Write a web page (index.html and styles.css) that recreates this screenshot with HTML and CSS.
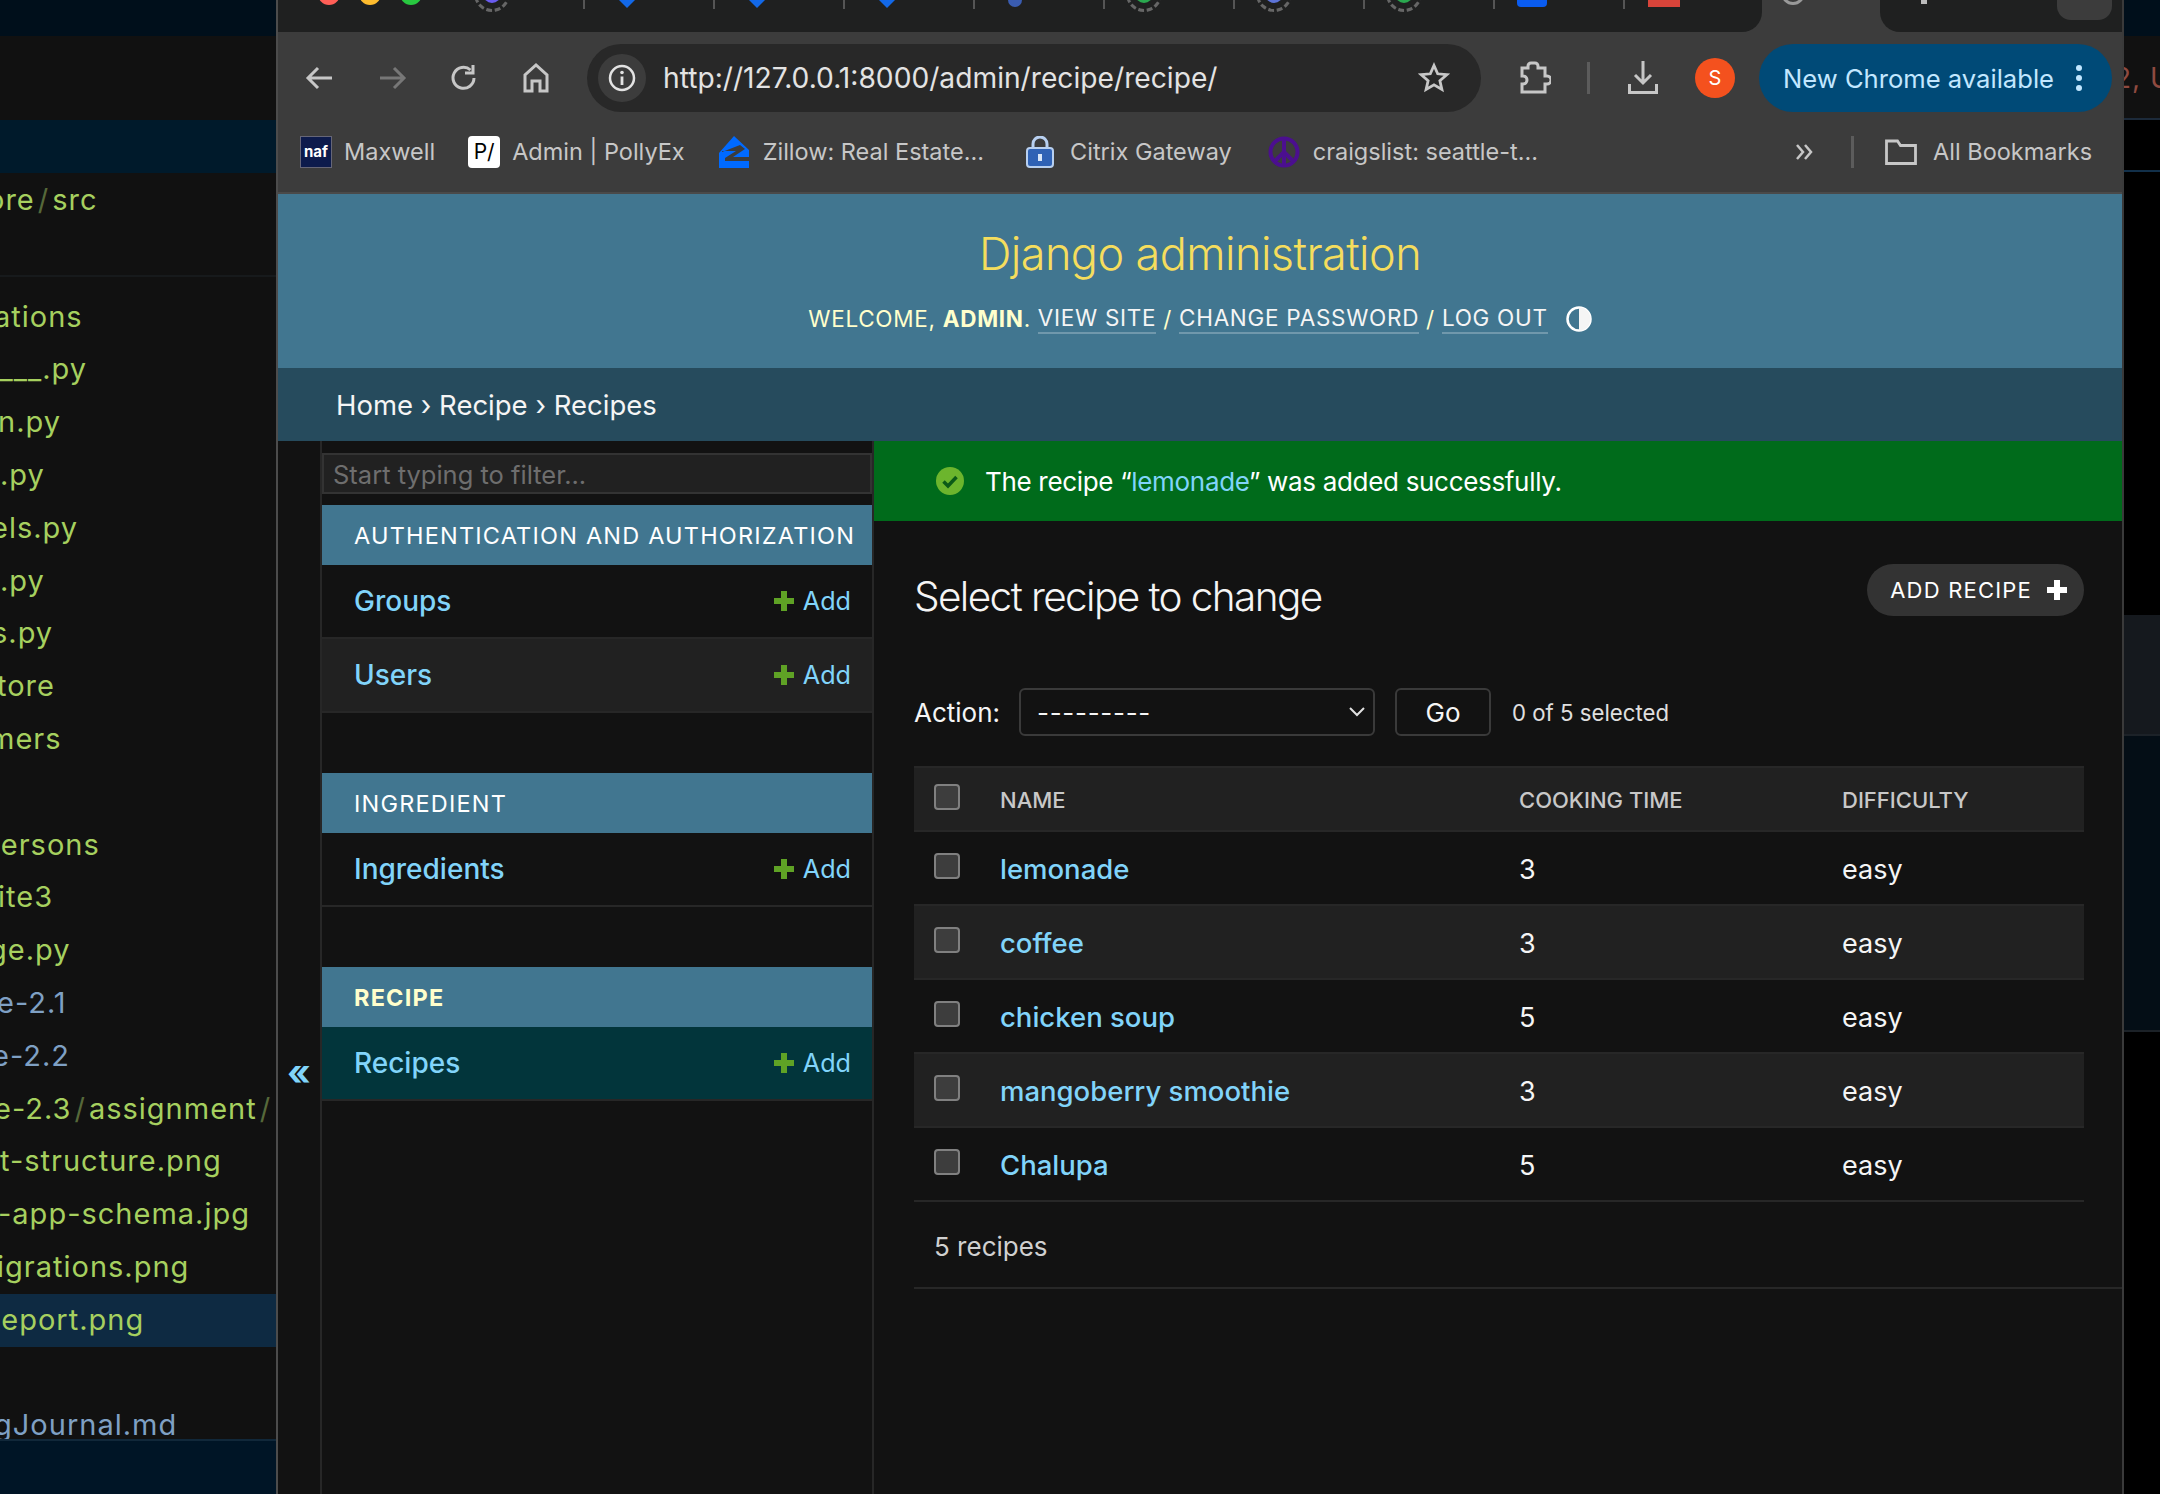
FILE: index.html
```html
<!DOCTYPE html>
<html lang="en" dir="ltr">
  <head>
    <meta charset="utf-8">
    <title>Select recipe to change | Django site admin</title>
    <link rel="stylesheet" href="styles.css">
  </head>
  <body>
    <div class="desktop">
      <div class="editor">
        <div class="ed-top"></div>
        <div class="ed-gap"></div>
        <div class="ed-tab"></div>
        <div class="ed-path ind-13">ore<i>/</i>src</div>
        <div class="ed-files">
          <div class="file ind-6">ations</div>
          <div class="file ind-11">t___.py</div>
          <div class="file ind-2">n.py</div>
          <div class="file">.py</div>
          <div class="file ind-9">els.py</div>
          <div class="file">.py</div>
          <div class="file ind-8">s.py</div>
          <div class="file ind-3">tore</div>
          <div class="file ind-11">mers</div>
          <div class="file"></div>
          <div class="file ind-18">persons</div>
          <div class="file ind-2">ite3</div>
          <div class="file ind-11">ge.py</div>
          <div class="file file-blue ind-3">e-2.1</div>
          <div class="file file-blue ind-8">e-2.2</div>
          <div class="file ind-6">e-2.3<i>/</i>assignment<i>/</i></div>
          <div class="file">t-structure.png</div>
          <div class="file ind-2">-app-schema.jpg</div>
          <div class="file ind-3">igrations.png</div>
          <div class="file file-active ind-18">Report.png</div>
          <div class="file"></div>
          <div class="file file-blue file-cut ind-6">gJournal.md</div>
        </div>
        <div class="ed-status"></div>
      </div>

      <div class="browser">
        <div class="tabstrip">
          <div class="tabs-left">
            <div class="lights"><span class="light red"></span><span class="light yellow"></span><span class="light green"></span></div>
            <div class="tab tab-first"><span class="fav fav-ring ring-first"><span class="fav-purple"></span></span></div>
            <div class="tab"><span class="fav fav-diamond"></span></div>
            <div class="tab"><span class="fav fav-diamond"></span></div>
            <div class="tab"><span class="fav fav-diamond"></span></div>
            <div class="tab"><span class="fav fav-pin"></span></div>
            <div class="tab"><span class="fav fav-ring"><span class="fav-green"></span></span></div>
            <div class="tab"><span class="fav fav-ring"><span class="fav-blue"></span></span></div>
            <div class="tab"><span class="fav fav-ring"><span class="fav-green"></span></span></div>
            <div class="tab"><span class="fav fav-square"></span></div>
            <div class="tab tab-last"><span class="fav fav-red"></span></div>
          </div>
          <div class="tab-active"><span class="fav fav-thin"></span></div>
          <div class="tab-rest"><span class="tab-dot"></span><span class="tab-btn"></span></div>
        </div>

        <div class="toolbar">
          <svg class="tool" width="32" height="32" viewBox="0 0 32 32"><path d="M28 16H5M14 6L4 16l10 10" fill="none" stroke="#c7c7c7" stroke-width="3"/></svg>
          <svg class="tool" width="32" height="32" viewBox="0 0 32 32"><path d="M4 16h23M18 6l10 10-10 10" fill="none" stroke="#777" stroke-width="3"/></svg>
          <svg class="tool" width="32" height="32" viewBox="0 0 32 32"><path d="M26 16a10.500 10.500 0 1 1-3.500-8" fill="none" stroke="#c7c7c7" stroke-width="3"/><path d="M25 3v8h-8" fill="none" stroke="#c7c7c7" stroke-width="3"/></svg>
          <svg class="tool" width="32" height="32" viewBox="0 0 32 32"><path d="M5 29V13L16 3l11 10v16h-7V19h-8v10z" fill="none" stroke="#c7c7c7" stroke-width="3"/></svg>
          <div class="omnibox">
            <span class="omni-chip"><svg width="28" height="28" viewBox="0 0 28 28"><circle cx="14" cy="14" r="12" fill="none" stroke="#e3e3e3" stroke-width="2.500"/><path d="M14 12.500V21" stroke="#e3e3e3" stroke-width="2.800"/><circle cx="14" cy="8.500" r="1.800" fill="#e3e3e3"/></svg></span>
            <span class="omni-url">http://127.0.0.1:8000/admin/recipe/recipe/</span>
            <svg width="32" height="32" viewBox="0 0 32 32"><path d="M16 3.500l3.700 8.300 9 .9-6.800 6 2 8.800-7.900-4.600-7.900 4.600 2-8.800-6.800-6 9-.9z" fill="none" stroke="#c7c7c7" stroke-width="2.800"/></svg>
          </div>
          <svg class="tool-ext" width="32" height="34" viewBox="0 0 32 34"><path d="M3 8h6V6a3 3 0 0 1 3-3h4a3 3 0 0 1 3 3v2h7v8h2a3 3 0 0 1 0 8h-2v8H3v-8h1a4 4 0 0 0 0-8H3z" fill="none" stroke="#c7c7c7" stroke-width="3"/></svg>
          <span class="tool-sep"></span>
          <svg class="tool-dl" width="32" height="34" viewBox="0 0 32 34"><path d="M16 1v21M8 15l8 8 8-8" fill="none" stroke="#c7c7c7" stroke-width="3"/><path d="M2.500 24v8.500h27V24" fill="none" stroke="#c7c7c7" stroke-width="3"/></svg>
          <span class="avatar">S</span>
          <div class="update-pill">
            <span>New Chrome available</span>
            <svg width="8" height="28" viewBox="0 0 8 28"><circle cx="4" cy="4" r="3" fill="#c2e7ff"/><circle cx="4" cy="14" r="3" fill="#c2e7ff"/><circle cx="4" cy="24" r="3" fill="#c2e7ff"/></svg>
          </div>
        </div>

        <div class="bookmarks">
          <a class="bm bm-maxwell"><span class="ico-naf">naf</span>Maxwell</a>
          <a class="bm bm-polly"><span class="ico-polly">P/</span>Admin | PollyEx</a>
          <a class="bm bm-zillow"><svg width="30" height="32" viewBox="0 0 30 32"><path d="M15 0l15 14v18H0V17z" fill="#006aff"/><path d="M3 16L21 9l5 4-12 8h16v4H6v-3l11-7H3z" fill="#3c3c3c"/></svg>Zillow: Real Estate...</a>
          <a class="bm bm-citrix"><svg width="28" height="32" viewBox="0 0 28 32"><rect x="1" y="12" width="26" height="19" rx="3" fill="#2f62b5" stroke="#b8d0f0" stroke-width="2"/><path d="M7 13V8a7 7 0 0 1 14 0v5" fill="none" stroke="#b8d0f0" stroke-width="3"/><rect x="12" y="18" width="4" height="7" fill="#d8e6f8"/></svg>Citrix Gateway</a>
          <a class="bm bm-craigs"><svg width="32" height="32" viewBox="0 0 32 32"><g fill="none" stroke="#4b0f8f" stroke-width="4"><circle cx="16" cy="16" r="13.500"/><path d="M16 3v26M16 16L6 26M16 16l10 10"/></g></svg>craigslist: seattle-t...</a>
          <svg class="bm-more" width="20" height="18" viewBox="0 0 20 18"><path d="M3 2l6 7-6 7M11 2l6 7-6 7" fill="none" stroke="#c7c7c7" stroke-width="2.500"/></svg>
          <span class="bm-sep"></span>
          <a class="bm bm-all"><svg width="32" height="26" viewBox="0 0 32 26"><path d="M1.500 24.500V2h11l3 4.500h15v18z" fill="none" stroke="#c7c7c7" stroke-width="2.800"/></svg>All Bookmarks</a>
        </div>

        <div class="page">
          <div class="site-header">
            <div class="branding">Django administration</div>
            <div class="user-tools">
              WELCOME, <b>ADMIN</b>. <a>VIEW SITE</a> / <a>CHANGE PASSWORD</a> / <a>LOG OUT</a>
              <svg class="theme-toggle" width="26" height="26" viewBox="0 0 26 26"><circle cx="13" cy="13" r="11.500" fill="none" stroke="#fff" stroke-width="2.500"/><path d="M13 1.500a11.500 11.500 0 0 1 0 23z" fill="#f5f5f5"/></svg>
            </div>
          </div>
          <div class="breadcrumbs">Home › Recipe › Recipes</div>

          <div class="main">
            <div class="nav-toggle">«</div>
            <div class="sidebar">
              <input class="nav-filter" placeholder="Start typing to filter...">
              <div class="module">
                <div class="caption">AUTHENTICATION AND AUTHORIZATION</div>
                <div class="nav-row"><a class="nav-link">Groups</a><a class="add-link"><svg class="plus" width="20" height="20" viewBox="0 0 20 20"><path d="M10 0v20M0 10h20" stroke="#5fa225" stroke-width="6"/></svg>Add</a></div>
                <div class="nav-row nav-row-alt"><a class="nav-link">Users</a><a class="add-link"><svg class="plus" width="20" height="20" viewBox="0 0 20 20"><path d="M10 0v20M0 10h20" stroke="#5fa225" stroke-width="6"/></svg>Add</a></div>
              </div>
              <div class="module">
                <div class="caption">INGREDIENT</div>
                <div class="nav-row"><a class="nav-link">Ingredients</a><a class="add-link"><svg class="plus" width="20" height="20" viewBox="0 0 20 20"><path d="M10 0v20M0 10h20" stroke="#5fa225" stroke-width="6"/></svg>Add</a></div>
              </div>
              <div class="module">
                <div class="caption caption-current">RECIPE</div>
                <div class="nav-row nav-row-current"><a class="nav-link">Recipes</a><a class="add-link"><svg class="plus" width="20" height="20" viewBox="0 0 20 20"><path d="M10 0v20M0 10h20" stroke="#5fa225" stroke-width="6"/></svg>Add</a></div>
              </div>
            </div>

            <div class="content">
              <div class="message">
                <svg width="28" height="28" viewBox="0 0 28 28"><circle cx="14" cy="14" r="14" fill="#6cb52d"/><path d="M7.500 14.500l4.500 4.500 8.500-9" fill="none" stroke="#0b5a17" stroke-width="3.500"/></svg>
                <span>The recipe “<a>lemonade</a>” was added successfully.</span>
              </div>
              <div class="content-inner">
                <div class="title-row">
                  <h1>Select recipe to change</h1>
                  <a class="add-btn">ADD RECIPE<svg width="20" height="20" viewBox="0 0 20 20"><path d="M10 0v20M0 10h20" stroke="#fff" stroke-width="6"/></svg></a>
                </div>
                <div class="actions">
                  <span class="action-label">Action:</span>
                  <div class="select"><span>---------</span><svg width="16" height="10" viewBox="0 0 16 10"><path d="M1 1l7 7 7-7" fill="none" stroke="#e0e0e0" stroke-width="2"/></svg></div>
                  <button class="go">Go</button>
                  <span class="counter">0 of 5 selected</span>
                </div>
                <table class="results">
                  <colgroup><col class="col-check"><col class="col-name"><col class="col-time"><col></colgroup>
                  <thead>
                    <tr><th class="cell-check"><input type="checkbox"></th><th>NAME</th><th>COOKING TIME</th><th>DIFFICULTY</th></tr>
                  </thead>
                  <tbody>
                    <tr><td class="cell-check"><input type="checkbox"></td><td><a>lemonade</a></td><td>3</td><td>easy</td></tr>
                    <tr class="alt"><td class="cell-check"><input type="checkbox"></td><td><a>coffee</a></td><td>3</td><td>easy</td></tr>
                    <tr><td class="cell-check"><input type="checkbox"></td><td><a>chicken soup</a></td><td>5</td><td>easy</td></tr>
                    <tr class="alt"><td class="cell-check"><input type="checkbox"></td><td><a>mangoberry smoothie</a></td><td>3</td><td>easy</td></tr>
                    <tr><td class="cell-check"><input type="checkbox"></td><td><a>Chalupa</a></td><td>5</td><td>easy</td></tr>
                  </tbody>
                </table>
                <div class="paginator">5 recipes</div>
              </div>
            </div>
          </div>
        </div>
      </div>

      <div class="backdrop">
        <div class="bd-top"></div>
        <div class="bd-text">2, U</div>
        <div class="bd-black"></div>
        <div class="bd-long"></div>
        <div class="bd-panel"></div>
        <div class="bd-navy"></div>
        <div class="bd-end"></div>
      </div>
    </div>
  </body>
</html>
```

FILE: styles.css
```css
html, body {
  margin: 0;
  padding: 0;
  width: 2160px;
  height: 1494px;
  overflow: hidden;
  background: #000;
  font-family: Inter, "Liberation Sans", sans-serif;
}
a { color: inherit; text-decoration: none; }

.desktop {
  display: flex;
  width: 2160px;
  height: 1494px;
}

/* editor behind the browser window */
.editor {
  width: 276px;
  flex: none;
  height: 1494px;
  display: flex;
  flex-direction: column;
  background: #111;
  color: #a6d05f;
  font-size: 29px;
  letter-spacing: 1px;
  overflow: hidden;
  white-space: nowrap;
}
.editor i { font-style: normal; color: #56683a; margin: 0 3px; }
.ed-top { height: 36px; background: #000f1b; }
.ed-gap { height: 84px; }
.ed-tab { height: 53px; background: #001a2b; }
.ed-path {
  height: 104px;
  line-height: 54px;
  border-bottom: 2px solid #171a1c;
  box-sizing: border-box;
}
.ed-files { padding-top: 13.600px; }
.file { height: 52.800px; line-height: 52.800px; }
.file-blue { color: #7fa0c4; }
.file-active { background: #0e2a42; }
.file-cut { height: 40px; overflow: hidden; }
.ed-status { flex: 1; background: #001526; border-top: 2px solid #11283a; }
/* names are cut by the window edge */
.ind-2 { text-indent: -2px; }
.ind-3 { text-indent: -3px; }
.ind-6 { text-indent: -6px; }
.ind-8 { text-indent: -8px; }
.ind-9 { text-indent: -9px; }
.ind-11 { text-indent: -11px; }
.ind-13 { text-indent: -13px; }
.ind-18 { text-indent: -18px; }

/* browser frame */
.browser {
  width: 1848px;
  flex: none;
  height: 1494px;
  box-sizing: border-box;
  border-left: 2px solid #4c4c4c;
  border-right: 2px solid #3a3a3a;
  display: flex;
  flex-direction: column;
  background: #1f2020;
}
.tabstrip {
  height: 32px;
  flex: none;
  display: flex;
  overflow: hidden;
  background: #3c3c3c;
}
.tabs-left {
  display: flex;
  flex: none;
  background: #1f2020;
  border-radius: 0 0 20px 0;
  overflow: hidden;
}
.lights {
  width: 178px;
  flex: none;
  display: flex;
  gap: 19px;
  padding-left: 40px;
  box-sizing: border-box;
}
.light {
  width: 22px;
  height: 22px;
  border-radius: 50%;
  margin-top: -17px;
}
.red { background: #ff5f57; }
.yellow { background: #febc2e; }
.green { background: #28c840; }
.tab {
  width: 130px;
  height: 9px;
  flex: none;
  border-right: 2px solid #555;
  box-sizing: border-box;
  display: flex;
}
.tab-first { width: 129px; }
.tab-last { width: 137px; border-right: 0; }
.fav { display: block; flex: none; }
.fav-ring {
  width: 36px;
  height: 36px;
  margin: -24px 0 0 21px;
  border-radius: 50%;
  border: 3px dashed #666;
  box-sizing: border-box;
  display: flex;
  align-items: center;
  justify-content: center;
}
.ring-first { margin-left: 18px; }
.fav-purple, .fav-green, .fav-blue { width: 18px; height: 18px; border-radius: 50%; }
.fav-purple { background: #6a5cf0; }
.fav-green { background: #2aa84f; }
.fav-blue { background: #5d74d8; }
.fav-diamond {
  width: 24px;
  height: 24px;
  margin: -21px 0 0 30px;
  background: #1268e8;
  transform: rotate(45deg);
}
.fav-pin { width: 14px; height: 20px; margin: -13px 0 0 33px; background: #3a5cb0; border-radius: 0 0 7px 7px; }
.fav-square { width: 30px; height: 20px; margin: -13px 0 0 22px; background: #0a5cf0; border-radius: 4px; }
.fav-red { width: 32px; height: 20px; margin: -13px 0 0 23px; background: #d8443a; }
.tab-active {
  width: 118px;
  flex: none;
  display: flex;
}
.fav-thin {
  width: 24px;
  height: 24px;
  margin: -19px 0 0 19px;
  border-radius: 50%;
  border: 3px solid #999;
  box-sizing: border-box;
}
.tab-rest {
  flex: 1;
  background: #1f2020;
  border-radius: 0 0 0 20px;
  display: flex;
  justify-content: space-between;
  padding: 0 10px 0 41px;
}
.tab-dot { width: 6px; height: 4px; background: #bbb; }
.tab-btn { width: 55px; height: 20px; background: #3c3c3c; border-radius: 0 0 14px 14px; }

.toolbar {
  height: 94px;
  flex: none;
  box-sizing: border-box;
  background: #3c3c3c;
  padding: 12px 11px 0 26px;
  display: flex;
  align-items: flex-start;
}
.tool { margin: 18px 40px 0 0; flex: none; }
.tool:nth-of-type(4) { margin-right: 35px; }
.omnibox {
  width: 894px;
  height: 68px;
  flex: none;
  box-sizing: border-box;
  background: #282828;
  border-radius: 34px;
  padding: 0 31px 0 11px;
  display: flex;
  align-items: center;
}
.omni-chip {
  width: 48px;
  height: 48px;
  flex: none;
  border-radius: 50%;
  background: #3c3c3c;
  display: flex;
  align-items: center;
  justify-content: center;
}
.omni-url {
  flex: 1;
  margin-left: 17px;
  color: #e3e3e3;
  font-size: 28.200px;
}
.tool-ext { margin: 16px 0 0 38px; flex: none; }
.tool-sep { width: 3px; height: 32px; background: #5c5c5c; margin: 18px 0 0 36px; flex: none; }
.tool-dl { margin: 16px 0 0 37px; flex: none; }
.avatar {
  width: 40px;
  height: 40px;
  margin: 14px 0 0 36px;
  flex: none;
  border-radius: 50%;
  background: #f4511e;
  color: #fff;
  font-size: 20px;
  line-height: 40px;
  text-align: center;
}
.update-pill {
  width: 353px;
  height: 68px;
  margin-left: 24px;
  flex: none;
  box-sizing: border-box;
  background: #004a77;
  border-radius: 34px;
  padding: 0 29px 0 24px;
  display: flex;
  align-items: center;
  justify-content: space-between;
  color: #c2e7ff;
  font-size: 25.600px;
}

.bookmarks {
  height: 68px;
  flex: none;
  box-sizing: border-box;
  background: #3c3c3c;
  border-bottom: 2px solid #4a4a4a;
  padding: 10px 0 0 22px;
  display: flex;
  align-items: flex-start;
  color: #c7c7c7;
  font-size: 23.500px;
  line-height: 30px;
}
.bm {
  display: flex;
  align-items: center;
  gap: 12px;
  height: 32px;
  flex: none;
}
.ico-naf {
  width: 32px;
  height: 32px;
  box-sizing: border-box;
  background: #0d1b4c;
  border: 1px solid #667;
  color: #fff;
  font-size: 15px;
  font-weight: 700;
  line-height: 30px;
  text-align: center;
}
.ico-polly {
  width: 32px;
  height: 32px;
  background: #fff;
  border-radius: 4px;
  color: #000;
  font-size: 21px;
  line-height: 32px;
  text-align: center;
}
.bm-polly { margin-left: 33px; }
.bm-zillow { margin-left: 34px; gap: 14px; }
.bm-citrix { margin-left: 42px; gap: 16px; }
.bm-craigs { margin-left: 36px; gap: 13px; }
.bm-more { margin: 7px 0 0 256px; flex: none; }
.bm-sep { width: 3px; height: 32px; background: #5c5c5c; margin-left: 37px; flex: none; }
.bm-all { margin-left: 31px; gap: 16px; }

/* django admin page */
.page {
  flex: 1;
  display: flex;
  flex-direction: column;
  background: #121212;
}
.site-header {
  height: 174px;
  flex: none;
  box-sizing: border-box;
  background: #417690;
  display: flex;
  flex-direction: column;
  align-items: center;
  padding-top: 32px;
}
.branding {
  color: #f5dd5d;
  font-size: 45px;
  font-weight: 300;
  letter-spacing: -0.550px;
  line-height: 56px;
}
.user-tools {
  margin-top: 22px;
  display: flex;
  align-items: center;
  gap: 7px;
  color: #ffc;
  font-size: 22.500px;
  letter-spacing: 0.700px;
  line-height: 28px;
}
.user-tools a {
  color: #f5f5f5;
  border-bottom: 2px solid rgba(255, 255, 255, 0.25);
}
.user-tools b { margin-right: -7px; }
.theme-toggle { margin-left: 11px; }
.breadcrumbs {
  height: 73px;
  flex: none;
  box-sizing: border-box;
  background: #264b5d;
  padding-left: 58px;
  color: #f5f5f5;
  font-size: 27.500px;
  line-height: 75px;
}
.main {
  flex: 1;
  display: flex;
}
.nav-toggle {
  width: 42px;
  flex: none;
  box-sizing: border-box;
  padding-top: 601px;
  color: #81d4fa;
  font-size: 36px;
  font-weight: 700;
  line-height: 60px;
  text-align: center;
}
.sidebar {
  width: 554px;
  flex: none;
  box-sizing: border-box;
  border-left: 2px solid #272727;
  border-right: 2px solid #272727;
  padding-top: 12px;
  display: flex;
  flex-direction: column;
}
.nav-filter {
  display: block;
  width: 550px;
  height: 41px;
  box-sizing: border-box;
  margin: 0 0 11px;
  padding: 2px 9px 0;
  background: #212121;
  border: 2px solid #333;
  color: #eee;
  font: 25.500px Inter, "Liberation Sans", sans-serif;
  outline: none;
}
.nav-filter::placeholder { color: #6e6e6e; opacity: 1; }
.module { margin-bottom: 60px; }
.caption {
  height: 60px;
  box-sizing: border-box;
  background: #417690;
  color: #fff;
  padding: 2px 0 0 32px;
  font-size: 23.500px;
  letter-spacing: 1.200px;
  line-height: 58px;
  white-space: nowrap;
}
.caption-current { color: #ffc; font-weight: 700; }
.nav-row {
  height: 74px;
  box-sizing: border-box;
  border-bottom: 2px solid #272727;
  padding: 0 21px 0 32px;
  display: flex;
  align-items: center;
  justify-content: space-between;
  color: #81d4fa;
}
.nav-row-alt { background: #212121; }
.nav-row-current { background: #02353b; }
.nav-link { font-size: 28px; font-weight: 500; }
.add-link {
  display: flex;
  align-items: center;
  gap: 9px;
  font-size: 25.200px;
}
.content {
  flex: 1;
  min-width: 0;
  display: flex;
  flex-direction: column;
}
.message {
  height: 80px;
  flex: none;
  box-sizing: border-box;
  background: #006b1b;
  padding-left: 62px;
  display: flex;
  align-items: center;
  gap: 21px;
  color: #fff;
  font-size: 26px;
  letter-spacing: -0.320px;
}
.message a { color: #81d4fa; }
.content-inner { padding: 43px 38px 0 40px; }
.title-row {
  display: flex;
  justify-content: space-between;
  align-items: flex-start;
}
h1 {
  margin: 0;
  color: #f5f5f5;
  font-size: 40.500px;
  font-weight: 300;
  letter-spacing: -1.600px;
  line-height: 66px;
}
.add-btn {
  height: 52px;
  box-sizing: border-box;
  background: #333;
  border-radius: 26px;
  padding: 0 17px 0 23px;
  display: flex;
  align-items: center;
  gap: 15px;
  color: #fff;
  font-size: 22px;
  letter-spacing: 1.200px;
}
.actions {
  margin-top: 58px;
  height: 48px;
  display: flex;
  align-items: center;
  color: #f5f5f5;
  font-size: 26px;
}
.select {
  width: 356px;
  height: 48px;
  box-sizing: border-box;
  margin-left: 19px;
  border: 2px solid #3a3a3a;
  border-radius: 6px;
  padding: 0 8px 0 16px;
  display: flex;
  align-items: center;
  justify-content: space-between;
  letter-spacing: 0.700px;
}
.go {
  width: 96px;
  height: 48px;
  margin-left: 20px;
  background: #121212;
  border: 2px solid #3a3a3a;
  border-radius: 6px;
  color: #f5f5f5;
  font: 26px Inter, "Liberation Sans", sans-serif;
}
.counter { margin-left: 21px; font-size: 22.200px; color: #e0e0e0; }
.results {
  width: 1170px;
  margin-top: 30px;
  table-layout: fixed;
  border-collapse: separate;
  border-spacing: 0;
}
.col-check { width: 66px; }
.col-name { width: 519px; }
.col-time { width: 323px; }
.results th {
  height: 66px;
  box-sizing: border-box;
  background: #212121;
  border-top: 2px solid #272727;
  border-bottom: 2px solid #272727;
  padding: 2px 0 0 20px;
  color: #c8c8c8;
  font-size: 22px;
  font-weight: 500;
  text-align: left;
}
.results td {
  height: 74px;
  box-sizing: border-box;
  border-bottom: 2px solid #272727;
  padding: 2px 0 0 20px;
  color: #f5f5f5;
  font-size: 27px;
}
.results td a { color: #81d4fa; font-size: 27.500px; font-weight: 500; }
.results .alt td { background: #212121; }
.results .cell-check { vertical-align: top; }
.results td.cell-check { padding-top: 21px; }
.results th.cell-check { padding-top: 16px; }
.results input {
  appearance: none;
  display: block;
  width: 26px;
  height: 26px;
  box-sizing: border-box;
  margin: 0;
  background: #3d3d3d;
  border: 2px solid #808080;
  border-radius: 4px;
}
.paginator {
  height: 87px;
  box-sizing: border-box;
  margin-right: -38px;
  border-bottom: 2px solid #272727;
  padding-left: 20px;
  color: #d0d0d0;
  font-size: 26px;
  line-height: 90px;
}

/* strip of other windows on the right */
.backdrop {
  flex: 1;
  display: flex;
  flex-direction: column;
  overflow: hidden;
}
.bd-top { height: 36px; background: #000f1b; }
.bd-text {
  height: 82px;
  background: #111;
  color: #8f4a40;
  font-size: 28px;
  line-height: 84px;
  text-indent: -10px;
  letter-spacing: 1px;
  white-space: nowrap;
}
.bd-black { height: 52px; background: #000; border-top: 2px solid #1c2a3a; box-sizing: border-box; }
.bd-long { height: 445px; background: #000; border-top: 2px solid #12304a; box-sizing: border-box; }
.bd-panel { height: 119px; background: #15191e; }
.bd-navy { height: 296px; background: #040e16; border-top: 2px solid #1c2228; box-sizing: border-box; }
.bd-end { flex: 1; background: #000; border-top: 2px solid #1c2228; }
```
